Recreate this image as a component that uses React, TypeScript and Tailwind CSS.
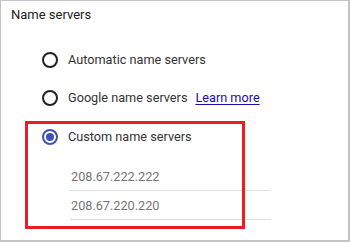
type RadioProps = { checked?: boolean };

function Radio({ checked }: RadioProps) {
  if (checked) {
    return (
      <span className="flex h-[16px] w-[16px] shrink-0 items-center justify-center rounded-full border-2 border-[#3f51b5]">
        <span className="h-[8px] w-[8px] rounded-full bg-[#3f51b5]" />
      </span>
    );
  }
  return <span className="h-[16px] w-[16px] shrink-0 rounded-full border-2 border-[#222]" />;
}

const servers = ["208.67.222.222", "208.67.220.220"];

export default function App() {
  return (
    <div className="relative h-[243px] w-[350px] bg-white font-['Roboto',sans-serif] text-[12.7px] text-[#333]">
      <div className="h-[242px] border-t border-l border-r-2 border-b-2 border-[#c4c4c4]">
        <div className="flex h-[27px] items-center pl-[10px] text-[13px] text-[#212121]">Name servers</div>

        <div className="mt-[13px] pl-[41px]">
          <div className="flex h-[38px] items-center gap-[10px]">
            <Radio />
            <span>Automatic name servers</span>
          </div>
          <div className="flex h-[38px] items-center gap-[10px]">
            <Radio />
            <span>Google name servers</span>
            <a href="#" className="ml-[-2px] text-[#1a0dab] underline underline-offset-2">
              Learn more
            </a>
          </div>
          <div className="flex h-[40px] items-center gap-[10px]">
            <Radio checked />
            <span>Custom name servers</span>
          </div>
        </div>

        <div className="mt-[5px] ml-[69px] w-[201px]">
          {servers.map((ip) => (
            <div key={ip} className="flex h-[29px] items-end border-b border-[#e0e0e0] pb-[4px] pl-[1px] text-[#757575]">
              {ip}
            </div>
          ))}
        </div>
      </div>

      <div className="absolute left-[25px] top-[121px] h-[108px] w-[220px] border-[3px] border-[#ed1c24]" />
    </div>
  );
}
